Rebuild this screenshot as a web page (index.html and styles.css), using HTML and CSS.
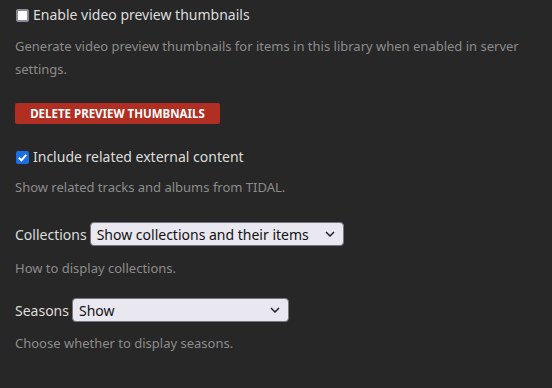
FILE: index.html
```html
<!DOCTYPE html>
<html>
  <head>
    <meta charset="utf-8" />
    <title>Library Settings</title>
    <link rel="stylesheet" href="styles.css">
  </head>
  <body>
    <div class="settings">
      <div class="field">
        <label class="check-row">
          <span class="box"></span>
          <span>Enable video preview thumbnails</span>
        </label>
        <div class="desc">Generate video preview thumbnails for items in this library when enabled in server settings.</div>
      </div>

      <div class="field btn-field">
        <button class="danger-btn">DELETE PREVIEW THUMBNAILS</button>
      </div>

      <div class="field related-field">
        <label class="check-row">
          <span class="box checked">
            <svg viewBox="0 0 13 13" width="13" height="13">
              <path d="M2.8 6.8 L5.4 9.3 L10.2 3.8" fill="none" stroke="#fff" stroke-width="2" />
            </svg>
          </span>
          <span>Include related external content</span>
        </label>
        <div class="desc">Show related tracks and albums from TIDAL.</div>
      </div>

      <div class="field collections-field">
        <div class="select-row">
          <span>Collections</span>
          <div class="select collections">
            <span>Show collections and their items</span>
            <svg class="chev" viewBox="0 0 10 6" width="10" height="6">
              <path d="M1 1 L5 5 L9 1" fill="none" stroke="#222" stroke-width="1.5" />
            </svg>
          </div>
        </div>
        <div class="desc">How to display collections.</div>
      </div>

      <div class="field">
        <div class="select-row">
          <span>Seasons</span>
          <div class="select seasons">
            <span>Show</span>
            <svg class="chev" viewBox="0 0 10 6" width="10" height="6">
              <path d="M1 1 L5 5 L9 1" fill="none" stroke="#222" stroke-width="1.5" />
            </svg>
          </div>
        </div>
        <div class="desc">Choose whether to display seasons.</div>
      </div>
    </div>
  </body>
</html>
```

FILE: styles.css
```css
* {
  margin: 0;
  padding: 0;
  box-sizing: border-box;
}

body {
  width: 552px;
  height: 388px;
  background: #272727;
  font-family: "Noto Sans", sans-serif;
  color: #dddddd;
  overflow: hidden;
}

.settings {
  padding: 5px 15px 0;
  display: flex;
  flex-direction: column;
}

.field {
  margin-bottom: 14px;
}

.btn-field {
  margin-bottom: 23px;
}

.related-field {
  margin-bottom: 23px;
}

.related-field .desc {
  margin-top: 9px;
}

.collections-field {
  margin-bottom: 18px;
}

.collections-field .desc {
  margin-top: 11px;
}

.check-row {
  display: flex;
  align-items: center;
  gap: 4px;
  font-size: 14px;
  line-height: 20px;
}

.box {
  width: 13px;
  height: 13px;
  margin-left: 1px;
  border: 2px solid #8a8a99;
  border-radius: 2px;
  background: #ffffff;
  display: flex;
  align-items: center;
  justify-content: center;
}

.box.checked {
  border: none;
  background: #1b6fe4;
}

.desc {
  margin-top: 10px;
  font-size: 13px;
  line-height: 23px;
  color: #8c8c8c;
}

.danger-btn {
  margin-top: 8px;
  width: 205px;
  height: 21px;
  border: none;
  border-radius: 2px;
  background: #b02f22;
  color: #ffffff;
  font-family: "Noto Sans", sans-serif;
  font-weight: 700;
  font-size: 11.5px;
}

.select-row {
  display: flex;
  align-items: center;
  gap: 3px;
  font-size: 14px;
}

.select {
  height: 24px;
  display: flex;
  align-items: center;
  justify-content: space-between;
  padding: 0 8px 0 6px;
  background: #e9e8f0;
  border: 1px solid #767680;
  border-radius: 4px;
  color: #111111;
}

.collections {
  width: 254px;
}

.seasons {
  width: 217px;
}
```
